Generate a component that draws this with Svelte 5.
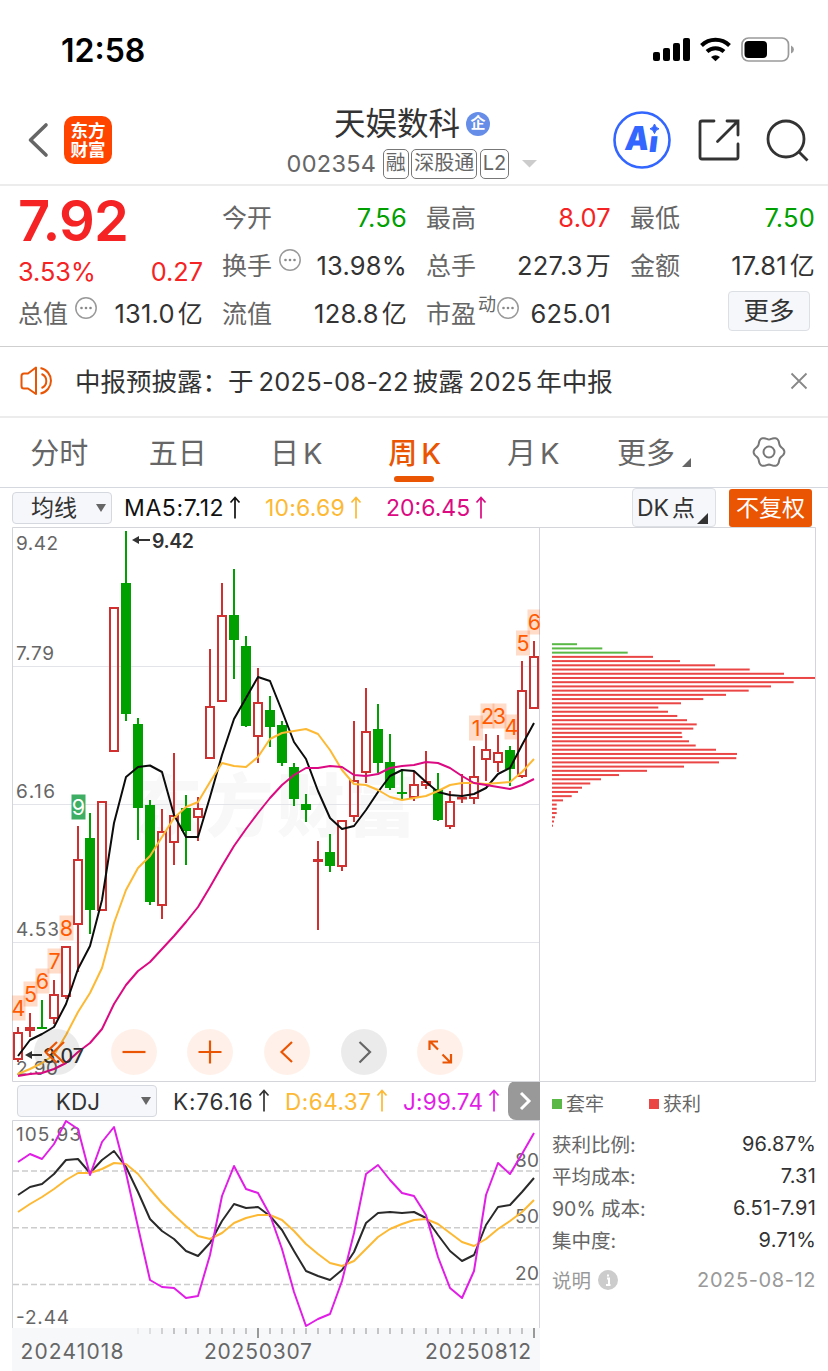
<script>
  // x of the n-th weekly bar
  const px = (i) => 18 + 12 * i;

  // [up, high, body top, body bottom, low]
  const candles = [
    [1, 1027, 1032, 1060, 1062], [1, 1013, 1027, 1031, 1037], [0, 1000, 1027, 1029, 1029], [1, 980, 994, 1019, 1024],
    [1, 946, 946, 997, 999], [1, 826, 859, 925, 972], [0, 813, 838, 910, 934], [1, 801, 801, 911, 911],
    [1, 607, 607, 752, 752], [0, 531, 583, 714, 721], [0, 718, 724, 808, 840], [0, 800, 805, 902, 905],
    [1, 809, 831, 906, 919], [1, 753, 815, 843, 865], [0, 795, 808, 831, 865], [1, 797, 808, 818, 841],
    [1, 649, 706, 759, 759], [1, 583, 615, 702, 702], [0, 569, 615, 640, 679], [0, 636, 646, 726, 727],
    [1, 668, 702, 737, 763], [0, 696, 710, 727, 747], [0, 721, 725, 763, 766], [0, 763, 767, 799, 806],
    [0, 794, 804, 810, 822], [1, 841, 859, 862, 930], [0, 834, 852, 866, 872], [1, 820, 820, 867, 871],
    [1, 721, 780, 817, 822], [1, 688, 731, 773, 783], [0, 704, 729, 763, 773], [0, 734, 762, 788, 790],
    [0, 769, 792, 794, 799], [1, 772, 784, 798, 801], [1, 751, 781, 786, 789], [0, 773, 789, 820, 821],
    [1, 791, 801, 827, 829], [1, 774, 797, 799, 803], [1, 746, 776, 799, 804], [1, 734, 749, 760, 781],
    [1, 735, 752, 763, 772], [0, 746, 750, 769, 786], [1, 661, 690, 777, 778], [1, 641, 656, 709, 709],
  ];

  const ma5 = [1056, 1040, 1034, 1027, 1004, 969, 946, 900, 823, 777, 767, 765.5, 772, 815, 837, 837, 797, 755, 719, 698, 677, 681, 711, 742, 759, 791, 818, 829, 826, 810, 792, 776, 770, 771, 782, 792, 795, 796, 794, 788, 774, 768, 745, 723];
  const ma10 = [1074, 1069, 1063, 1055, 1035, 1012, 993, 968, 923, 890, 868, 856, 837, 818, 807, 802, 782, 763, 766, 767, 757, 739, 733, 731, 729, 734, 750, 770, 784, 785, 790, 797, 800, 798, 796, 791, 785, 783, 783, 784, 783, 782, 772, 759];
  const ma20 = [1076, 1074, 1073, 1069, 1063, 1052, 1043, 1029, 1004, 985, 971, 962, 949, 936, 922, 907, 887, 866, 846, 829, 813, 798, 785, 775, 768, 768, 766, 767, 775, 776, 774, 768, 766, 765, 762, 763, 768, 776, 783, 785, 787, 789, 785, 779];

  const lineK = [1195, 1187, 1184, 1174, 1160, 1159, 1173, 1160, 1151, 1167, 1192, 1219, 1231, 1239, 1251, 1256, 1243, 1221, 1204, 1208, 1207, 1216, 1230, 1251, 1271, 1276, 1280, 1270, 1252, 1223, 1213, 1212, 1213, 1212, 1218, 1235, 1251, 1261, 1255, 1225, 1207, 1205, 1192, 1178];
  const lineD = [1212, 1204, 1197, 1189, 1180, 1173, 1173, 1169, 1163, 1164, 1174, 1189, 1203, 1215, 1226, 1236, 1239, 1233, 1223, 1218, 1215, 1215, 1220, 1231, 1244, 1254, 1263, 1266, 1261, 1249, 1237, 1229, 1224, 1220, 1219, 1224, 1233, 1242, 1246, 1239, 1229, 1221, 1212, 1200];
  const lineJ = [1162, 1154, 1159, 1144, 1121, 1129, 1175, 1142, 1127, 1173, 1227, 1280, 1287, 1288, 1298, 1296, 1255, 1196, 1166, 1189, 1193, 1215, 1249, 1292, 1326, 1319, 1314, 1281, 1233, 1174, 1165, 1180, 1193, 1196, 1215, 1257, 1288, 1298, 1271, 1195, 1163, 1174, 1154, 1133];

  const points = (ys) => ys.map((y, i) => `${px(i)},${y}`).join(" ");

  // chip distribution, bar lengths from top to bottom
  const chips = [25, 50.3, 75.7, 101, 128, 163, 197.7, 232, 263, 241.7, 219, 196.7, 174, 151.3, 129, 106.3, 116, 125.3, 135, 144.7, 141.3, 129.7, 130.3, 137, 143.7, 164, 185, 184.3, 167, 132, 95, 67, 49, 38.3, 30, 26, 19.7, 11, 4.7, 4.7, 4.7, 3, 2, 1];

  // nine-turn marks: [digit, x, y, done]
  const turns = [
    [4, 18.5, 1008], [5, 30.5, 994], [6, 42.5, 981], [7, 54.5, 961], [8, 66.5, 928], [9, 78.5, 807, true],
    [1, 476, 728], [2, 487.5, 716], [3, 499.5, 716], [4, 511.5, 727], [5, 523, 643], [6, 534.5, 622],
  ];

  const ticks = Array.from({ length: 34 }, (_, n) => n + 10);

  // six-lobed outline of the settings icon
  const gear = Array.from({ length: 72 }, (_, n) => {
    const a = (n * Math.PI) / 36;
    const r = 14 + 1.4 * Math.cos(6 * a);
    return `${(r * Math.cos(a)).toFixed(2)},${(r * Math.sin(a)).toFixed(2)}`;
  }).join(" ");

  const tabs = ["分时", "五日", "日K", "周K", "月K"];
  let active = $state("周K");

  const quotes = [
    [["今开", "7.56", "down"], ["换手", "13.98%", "", "", true], ["流值", "128.8亿", ""]],
    [["最高", "8.07", "up"], ["总手", "227.3万", ""], ["市盈", "625.01", "", "动", true]],
  ];
  const stats = [["获利比例:", "96.87%"], ["平均成本:", "7.31"], ["90% 成本:", "6.51-7.91"], ["集中度:", "9.71%"]];
</script>

{#snippet dots()}
  <svg class="dots" width="24" height="24" viewBox="0 0 24 24">
    <circle cx="12" cy="12" r="10.2" fill="none" stroke="#999" stroke-width="1.5" />
    <circle cx="7.5" cy="12" r="1.3" fill="#888" />
    <circle cx="12" cy="12" r="1.3" fill="#888" />
    <circle cx="16.5" cy="12" r="1.3" fill="#888" />
  </svg>
{/snippet}

{#snippet arrow()}
  <svg class="arrow" width="12" height="24" viewBox="0 0 12 24" fill="none" stroke="currentColor" stroke-width="1.7">
    <path d="M6 22.500V1.500M1.500 6.500 6 1.500 10.500 6.500" />
  </svg>
{/snippet}

{#snippet num(text)}{#each text.split(/([亿万])/) as part}{#if part === "亿" || part === "万"}<i class="unit">{part}</i>{:else}{part}{/if}{/each}{/snippet}

<main>
  <div class="status">
    <span class="time">12:58</span>
    <svg width="142" height="26" viewBox="652 37 142 26">
      <rect x="653" y="52" width="7" height="9" rx="2" />
      <rect x="663" y="48" width="7" height="13" rx="2" />
      <rect x="673" y="43" width="7" height="18" rx="2" />
      <rect x="683" y="38" width="7" height="23" rx="2" />
      <g fill="none" stroke="#000" stroke-width="4">
        <path d="M701.500 45.500a20 20 0 0 1 28 0" />
        <path d="M707 51.500a12.500 12.500 0 0 1 17 0" />
      </g>
      <path d="M711 57q4.500-3.600 9 0l-4.500 4.200z" />
      <rect x="742" y="38" width="46.500" height="23" rx="6.500" fill="none" stroke="#9a9a9a" stroke-width="1.700" />
      <rect x="744.500" y="41" width="22.500" height="17" rx="4" />
      <path d="M791 45.500q3 1.500 3 4t-3 4z" fill="#9a9a9a" />
    </svg>
  </div>

  <header>
    <div class="left">
      <svg width="24" height="36" viewBox="0 0 24 36"><path d="M20 3 4.500 18 20 33" fill="none" stroke="#666" stroke-width="3.600" stroke-linecap="round" stroke-linejoin="round" /></svg>
      <div class="logo"><span>东方</span><span>财富</span></div>
    </div>
    <div class="title">
      <div class="name">天娱数科<b class="ent">企</b></div>
      <div class="code">
        <span class="digits">002354</span>
        <span class="tag">融</span><span class="tag">深股通</span><span class="tag l2">L2</span>
        <svg class="caret" width="16" height="8" viewBox="0 0 16 8"><path d="M0 0h15L7.500 7.500z" fill="#ccc" /></svg>
      </div>
    </div>
    <div class="actions">
      <svg width="60" height="60" viewBox="612 110 60 60">
        <circle cx="642" cy="140" r="27.500" fill="none" stroke="#36f" stroke-width="2.600" />
        <g class="ai">
          <text transform="translate(624 150) skewX(-7)" textLength="24" lengthAdjust="spacingAndGlyphs">A</text>
          <text transform="translate(648 152) skewX(-7)" font-size="29" textLength="9" lengthAdjust="spacingAndGlyphs">ı</text>
        </g>
        <path d="M654.500 124q1 4 4.500 4.800q-3.500.8-4.500 4.800q-1-4-4.500-4.800q3.500-.8 4.500-4.800z" fill="#36f" stroke="#36f" />
      </svg>
      <svg width="42" height="42" viewBox="697 119 42 42" fill="none" stroke="#333" stroke-width="2.800">
        <path d="M713 121h-12q-2 0-2 2v34q0 2 2 2h34q2 0 2-2v-13M726 121h11v14M737 121l-20.500 20.500" stroke-linecap="round" />
      </svg>
      <svg width="43" height="43" viewBox="766 118 43 43" fill="none" stroke="#333" stroke-width="2.800">
        <circle cx="786" cy="138" r="18" /><path d="M799 151l8.500 8.500" />
      </svg>
    </div>
  </header>

  <section class="quote">
    <div class="col first">
      <strong class="price">7.92</strong>
      <div class="change"><span>3.53%</span><span>0.27</span></div>
      <div class="cell"><span class="label">总值</span>{@render dots()}<span class="val">{@render num("131.0亿")}</span></div>
    </div>
    {#each quotes as col}
      <div class="col">
        {#each col as [label, value, tone, sup, info]}
          <div class="cell">
            <span class="label">{label}</span>{#if sup}<sup>{sup}</sup>{/if}{#if info}{@render dots()}{/if}
            <span class="val {tone}">{@render num(value)}</span>
          </div>
        {/each}
      </div>
    {/each}
    <div class="col">
      <div class="cell"><span class="label">最低</span><span class="val down">7.50</span></div>
      <div class="cell"><span class="label">金额</span><span class="val">{@render num("17.81亿")}</span></div>
      <button class="more">更多</button>
    </div>
  </section>

  <section class="notice">
    <svg width="36" height="32" viewBox="18 365 36 32" fill="none" stroke="#ea5504" stroke-width="2">
      <path d="M35 367.500v26.500l-8-5.500h-4q-2.500 0-2.500-2.500v-10q0-2.500 2.500-2.500h4z" stroke-linejoin="round" />
      <path d="M40.500 374a7.500 7.500 0 0 1 0 14M39.500 368a13 13 0 0 1 0 25.500" />
    </svg>
    <p>中报预披露：<span class="g">于</span><span class="n">2025-08-22</span>披露<span class="n y">2025</span>年中报</p>
    <svg width="18" height="18" viewBox="0 0 18 18"><path d="M1.500 1.500l15 15M16.500 1.500l-15 15" stroke="#888" stroke-width="1.800" /></svg>
  </section>

  <nav>
    {#each tabs as tab}
      <button class="tab" class:active={tab === active} onclick={() => (active = tab)}>
        {tab[0]}{#if tab[1] === "K"}<span class="k">K</span>{:else}{tab[1]}{/if}
      </button>
    {/each}
    <button class="tab wide">更多<svg width="9" height="9" viewBox="0 0 9 9"><path d="M9 0v9H0z" fill="#666" /></svg></button>
    <svg class="gear" width="34" height="32" viewBox="-17 -16 34 32" fill="none" stroke="#777" stroke-width="2">
      <polygon points={gear} />
      <circle r="5.500" />
    </svg>
  </nav>

  <section class="ma">
    <button class="select"><em>均线</em><i></i></button>
    <span class="m5">MA5:7.12{@render arrow()}</span>
    <span class="m10">10:6.69{@render arrow()}</span>
    <span class="m20">20:6.45{@render arrow()}</span>
    <button class="dk">DK<em>点</em><svg width="11" height="11" viewBox="0 0 11 11"><path d="M11 0v11H0z" fill="#333" /></svg></button>
    <button class="fq">不复权</button>
  </section>

  <section class="charts">
    <div class="kline">
      <svg width="528" height="555" viewBox="12 527 528 555">
        <text x="134" y="831" class="mark" textLength="282">东方财富</text>
        <path d="M12 666.500h528M12 804.500h528M12 942.500h528" stroke="#e3e4ea" />
        <path d="M540 527.500H12.500v554H540M539.500 527v554" fill="none" stroke="#d3d5da" />
        <g class="axis">
          <text x="16" y="549.500" textLength="42">9.42</text>
          <text x="16" y="659.500" textLength="38">7.79</text>
          <text x="16" y="797.500" textLength="39">6.16</text>
          <text x="16" y="935.500" textLength="43">4.53</text>
          <text x="16" y="1075" textLength="42">2.90</text>
        </g>
        {#each candles as [up, high, top, bottom, low], i}
          {#if up}
            <g fill="none" stroke="#d0302f" stroke-width="2">
              <path d="M{px(i)} {high}V{top}M{px(i)} {bottom}V{low}" />
              <rect x={px(i) - 4} y={top + 1} width="8" height={Math.max(bottom - top - 2, 0.5)} />
            </g>
          {:else}
            <rect x={px(i) - 1} y={high} width="2" height={low - high} fill="#00a000" />
            <rect x={px(i) - 5} y={top} width="10" height={bottom - top} fill="#00a000" />
          {/if}
        {/each}
        <g fill="none" stroke-width="2" stroke-linejoin="round">
          <polyline points={points(ma5)} stroke="#0c0c0c" />
          <polyline points={points(ma10)} stroke="#fdb933" />
          <polyline points={points(ma20)} stroke="#dc0a82" />
        </g>
        {#each turns as [digit, x, y, done]}
          <rect x={x - 7} y={y - 12.5} width="14" height="25" fill={done ? "#3dae63" : "rgba(255, 96, 10, 0.22)"} />
          <text {x} y={y + 8} class="turn" fill={done ? "#fff" : "#ff5a00"}>{digit}</text>
        {/each}
        <path d="M138 540h12M30 1055h12" stroke="#333" stroke-width="2" />
        <path d="M132 540l7-4v8zM25 1055l7-4v8z" fill="#333" />
        <text x="152" y="548" class="peak" textLength="42">9.42</text>
        <text x="43" y="1062.500" class="peak low" textLength="41">3.07</text>
      </svg>
      <div class="tools">
        <button class="grey"><svg viewBox="0 0 46 46"><path d="M23 13 12 23.500 23 34M30 13 19 23.500 30 34" /></svg></button>
        <button><svg viewBox="0 0 46 46"><path d="M11.500 23h23" /></svg></button>
        <button><svg viewBox="0 0 46 46"><path d="M11.500 23h23M23 11.500v23" /></svg></button>
        <button><svg viewBox="0 0 46 46"><path d="M28 13 17.500 23 28 33" /></svg></button>
        <button class="grey next"><svg viewBox="0 0 46 46"><path d="M18.500 13 29 23 18.500 33.500" /></svg></button>
        <button><svg viewBox="0 0 46 46"><path d="M21 20.500 13 12.500M12.500 21v-8.500H21M25.500 25.500l8 8M34 25v8.500h-8.500" /></svg></button>
      </div>
    </div>
    <svg width="276" height="555" viewBox="540 527 276 555">
      <path d="M540 527.500h275.500v554H540" fill="none" stroke="#d3d5da" />
      {#each chips as w, i}
        <rect x="552" y={643.2 + i * 4.221} width={w} height="2" fill={i < 3 ? "#5ab946" : "#eb4646"} />
      {/each}
    </svg>
  </section>

  <section class="bottom">
    <div class="kdj">
      <div class="bar">
        <button class="select big">KDJ<i></i></button>
        <span class="kv">K:76.16{@render arrow()}</span>
        <span class="dv">D:64.37{@render arrow()}</span>
        <span class="jv">J:99.74{@render arrow()}</span>
        <button class="slide"><svg width="14" height="20" viewBox="0 0 14 20"><path d="M3 2l8 8-8 8" fill="none" stroke="#fff" stroke-width="3" /></svg></button>
      </div>
      <svg width="528" height="251" viewBox="12 1120 528 251">
        <path d="M540 1120.500H12.500V1328M539.500 1120v208" fill="none" stroke="#d3d5da" />
        <path d="M13 1171h526M13 1227.700h526M13 1284.500h526" stroke="#ccc" stroke-width="1.600" stroke-dasharray="6 3" />
        <g class="axis">
          <text x="16" y="1141" textLength="65">105.93</text>
          <text x="16" y="1323.500" textLength="53">-2.44</text>
          <text x="515" y="1167" textLength="24">80</text>
          <text x="515" y="1223" textLength="24">50</text>
          <text x="515" y="1280" textLength="24">20</text>
        </g>
        <g fill="none" stroke-width="2" stroke-linejoin="round">
          <polyline points={points(lineK)} stroke="#2a2a2a" />
          <polyline points={points(lineD)} stroke="#fdb933" />
          <polyline points={points(lineJ)} stroke="#e11ee6" />
        </g>
        <rect x="12" y="1328" width="528" height="43" fill="#f7f8fa" />
        {#each ticks as i}
          <rect x={px(i) - 1} y="1328" width="2" height={i === 20 || i === 43 ? 10 : 6}
            fill={i === 20 || i === 43 ? "#999" : "#c4c4c6"} opacity={i < 13 ? (i - 9) / 4 : 1} />
        {/each}
        <g class="date">
          <text x="20.500" y="1359" textLength="103">20241018</text>
          <text x="204" y="1359" textLength="108">20250307</text>
          <text x="425" y="1359" textLength="106">20250812</text>
        </g>
      </svg>
    </div>
    <aside>
      <div class="legend"><i class="g"></i><span>套牢</span><i class="r"></i><span>获利</span></div>
      {#each stats as [label, value]}
        <div class="stat"><span>{label}</span><b>{value}</b></div>
      {/each}
      <div class="stat note">
        <span>说明</span>
        <svg width="20" height="20" viewBox="0 0 20 20"><circle cx="10" cy="10" r="10" fill="#ccc" /><path d="M9 8.500h2V15M8 15h4.500M10 4.500v2" stroke="#fff" stroke-width="2" fill="none" /></svg>
        <b>2025-08-12</b>
      </div>
    </aside>
  </section>
</main>

<style>
  :global(body) {
    background: #fff;
  }
  main {
    width: 828px;
    height: 1371px;
    overflow: hidden;
    font-family: Inter, "Noto Sans CJK SC", sans-serif;
    color: #333;
  }
  button {
    font: inherit;
    color: inherit;
    border: 0;
    padding: 0;
    margin: 0;
    background: none;
    box-sizing: border-box;
  }
  svg {
    display: block;
    flex: none;
  }
  i,
  em {
    font-style: normal;
  }

  /* status bar */
  .status {
    height: 94px;
    box-sizing: border-box;
    padding: 6px 34px 0 61px;
    display: flex;
    justify-content: space-between;
    align-items: center;
    color: #000;
  }
  .time {
    font-size: 32px;
    font-weight: 600;
  }

  /* title bar */
  header {
    height: 92px;
    box-sizing: border-box;
    border-bottom: 2px solid #ececec;
    padding: 2px 19px 0 26px;
    display: grid;
    grid-template-columns: 211px 1fr 195px;
    align-items: center;
  }
  .left {
    display: flex;
    align-items: center;
    gap: 14px;
  }
  .logo {
    width: 48px;
    height: 48px;
    border-radius: 10px;
    background: #ff4400;
    color: #fff;
    font-size: 17.5px;
    font-weight: 700;
    line-height: 19px;
    display: flex;
    flex-direction: column;
    justify-content: center;
    align-items: center;
  }
  .title {
    display: flex;
    flex-direction: column;
    white-space: nowrap;
    padding-top: 7px;
  }
  .name {
    font-size: 31.5px;
    line-height: 40px;
    height: 40px;
    padding-left: 97px;
    display: flex;
    align-items: center;
  }
  .ent {
    width: 24px;
    height: 24px;
    margin-left: 6px;
    border-radius: 50%;
    background: #668ee8;
    color: #fff;
    font-size: 15px;
    line-height: 22px;
    text-align: center;
  }
  .code {
    display: flex;
    align-items: center;
    height: 40px;
    padding-left: 49.5px;
    gap: 2.5px;
    color: #666;
  }
  .digits {
    font-size: 23.5px;
    letter-spacing: 0.3px;
    margin-right: 4px;
  }
  .tag {
    height: 30px;
    line-height: 27px;
    box-sizing: border-box;
    border: 1px solid #777;
    border-radius: 5px;
    padding: 0 2px;
    font-size: 20px;
  }
  .caret {
    margin-left: 10px;
  }
  .actions {
    display: flex;
    align-items: center;
    justify-content: flex-end;
    gap: 26px;
  }
  .ai {
    font: 900 33px Inter, sans-serif;
    fill: #36f;
  }

  /* quote */
  .quote {
    height: 161px;
    box-sizing: border-box;
    border-bottom: 1px solid #cfcfcf;
    padding: 7px 12px 0 18px;
    display: grid;
    grid-template-columns: repeat(4, 185px);
    column-gap: 19px;
  }
  .col {
    display: flex;
    flex-direction: column;
  }
  .cell {
    height: 48px;
    display: flex;
    align-items: center;
    font-size: 25px;
    white-space: nowrap;
  }
  .label {
    color: #666;
    padding-bottom: 3px;
  }
  .val {
    margin-left: auto;
    font-size: 25.5px;
    letter-spacing: 0.2px;
  }
  .unit {
    margin-left: 3px;
    font-size: 25px;
    line-height: 24px;
  }
  .up,
  .price,
  .change {
    color: #f52323;
  }
  .down {
    color: #00a000;
  }
  .price {
    font-size: 56px;
    line-height: 56px;
    height: 56px;
    font-weight: 600;
    letter-spacing: -0.8px;
  }
  .change {
    height: 40px;
    display: flex;
    align-items: center;
    justify-content: space-between;
    font-size: 25.3px;
    padding-top: 5px;
    box-sizing: border-box;
  }
  .dots {
    margin: -10px 0 0 6px;
  }
  sup {
    font-size: 18px;
    line-height: 18px;
    color: #666;
    margin: -16px 0 0 2px;
    vertical-align: baseline;
  }
  sup + .dots {
    margin-left: 0;
  }
  .more {
    align-self: flex-end;
    width: 82px;
    height: 40px;
    margin: 2px 5px 0 0;
    border: 1px solid #dcdfe4;
    border-radius: 4px;
    background: #f6f7fa;
    font-size: 25.5px;
    line-height: 36px;
  }

  /* notice */
  .notice {
    height: 71px;
    box-sizing: border-box;
    border-bottom: 2px solid #ececec;
    padding: 0 20px 0 19px;
    display: flex;
    align-items: center;
  }
  .notice p {
    flex: 1;
    margin: -5px 0 0 20px;
    font-size: 25.5px;
    white-space: nowrap;
  }
  .n {
    margin: 0 4px 0 5px;
    letter-spacing: 0.2px;
  }
  .notice > svg {
    margin-top: -1px;
  }

  /* period tabs */
  nav {
    height: 70px;
    box-sizing: border-box;
    border-bottom: 1px solid #d5d8de;
    display: flex;
    align-items: center;
  }
  .tab {
    position: relative;
    width: 118.500px;
    height: 70px;
    padding-bottom: 4px;
    font-size: 29px;
    color: #666;
    white-space: nowrap;
  }
  .k {
    margin-left: 4px;
  }
  .active {
    color: #ea5504;
    font-weight: 500;
  }
  .active::after {
    content: "";
    position: absolute;
    left: 38px;
    bottom: 6px;
    width: 40px;
    height: 6px;
    border-radius: 3px;
    background: #ea5504;
  }
  .wide {
    display: flex;
    align-items: center;
    justify-content: center;
    gap: 7px;
    width: 123px;
  }
  .wide svg {
    margin-top: 24px;
  }
  .gear {
    margin: -2px 0 0 36px;
  }

  /* averages */
  .ma {
    height: 39px;
    padding: 0 16px 0 12px;
    display: flex;
    align-items: center;
    font-size: 23px;
    white-space: nowrap;
  }
  .select {
    width: 100px;
    height: 32px;
    border: 1px solid #d5d8de;
    border-radius: 4px;
    background: #f6f7fa;
    display: flex;
    align-items: center;
    justify-content: flex-end;
    gap: 19px;
    padding-right: 5px;
  }
  .select em,
  .dk em {
    padding-bottom: 3px;
  }
  .select i {
    border: 5px solid transparent;
    border-top: 8px solid #666;
    border-bottom: 0;
  }
  .ma span,
  .bar span {
    display: flex;
    align-items: center;
    gap: 5px;
  }
  .m5 {
    margin-left: 12px;
    width: 141px;
    letter-spacing: 0.6px;
    color: #111;
  }
  .m10,
  .dv {
    color: #fdb933;
  }
  .m10 {
    width: 121px;
    letter-spacing: 0.2px;
  }
  .m20 {
    color: #dc0a82;
  }
  .dk {
    margin-left: auto;
    width: 84px;
    height: 39px;
    border: 1px solid #dcdfe4;
    border-radius: 4px;
    background: #f6f7fa;
    display: flex;
    align-items: center;
    padding-left: 4px;
    gap: 3px;
  }
  .dk svg {
    margin: 21px 0 0 -1px;
  }
  .fq {
    width: 83px;
    height: 38px;
    margin: 1px 0 0 13px;
    border-radius: 3px;
    background: #ea5504;
    color: #fff;
    white-space: nowrap;
    line-height: 35px;
  }

  /* charts */
  .charts,
  .bottom {
    display: flex;
    padding: 0 12px;
  }
  .kline {
    position: relative;
  }
  .axis {
    font-size: 19px;
    fill: #666;
  }
  .date {
    font-size: 21px;
    fill: #666;
  }
  .mark {
    font-size: 68px;
    font-weight: 900;
    fill: #f8f8f8;
  }
  .turn {
    font-size: 21.5px;
    text-anchor: middle;
  }
  .peak {
    font-size: 19.5px;
    font-weight: 600;
    fill: #333;
  }
  .low {
    font-weight: 500;
  }
  .tools {
    position: absolute;
    left: 22px;
    top: 502px;
    display: flex;
    gap: 30.700px;
  }
  .tools button {
    width: 46px;
    height: 46px;
    border-radius: 50%;
    background: rgba(255, 98, 20, 0.09);
  }
  .tools .grey {
    background: rgba(0, 0, 0, 0.08);
  }
  .tools svg {
    fill: none;
    stroke: #ea5504;
    stroke-width: 2.2;
  }
  .tools .next svg {
    stroke: #666;
  }

  /* kdj panel */
  .kdj {
    width: 528px;
  }
  .bar {
    height: 38px;
    display: flex;
    align-items: center;
    font-size: 22.5px;
    white-space: nowrap;
  }
  .big {
    width: 140px;
    margin-left: 5px;
    gap: 41px;
  }
  .kv {
    margin-left: 16px;
    width: 112px;
    letter-spacing: 0.8px;
  }
  .dv {
    width: 118px;
    letter-spacing: 0.5px;
  }
  .jv {
    color: #e11ee6;
    letter-spacing: 0.2px;
  }
  .slide {
    width: 32px;
    height: 39px;
    margin: -1px 0 0 auto;
    border-radius: 8px 0 0 8px;
    background: #999;
    padding-left: 10px;
  }

  /* distribution figures */
  aside {
    flex: 1;
    padding-left: 12px;
    color: #666;
    font-size: 19.5px;
  }
  .legend {
    height: 46px;
    display: flex;
    align-items: center;
  }
  .legend span {
    padding-bottom: 5px;
    font-size: 19px;
  }
  .legend i {
    width: 10px;
    height: 10px;
    margin: -3px 4px 0 0;
    background: #5ab946;
  }
  .legend .r {
    margin-left: 45px;
    background: #eb4646;
  }
  .stat {
    height: 32px;
    display: flex;
    align-items: center;
  }
  .stat span {
    padding-bottom: 2px;
  }
  .stat b {
    margin-left: auto;
    font-weight: 400;
    font-size: 20px;
    letter-spacing: 0.2px;
    color: #333;
  }
  .note,
  .note b {
    color: #999;
  }
  .note b {
    letter-spacing: 0.6px;
  }
  .note {
    height: 48px;
    gap: 7px;
  }
</style>
